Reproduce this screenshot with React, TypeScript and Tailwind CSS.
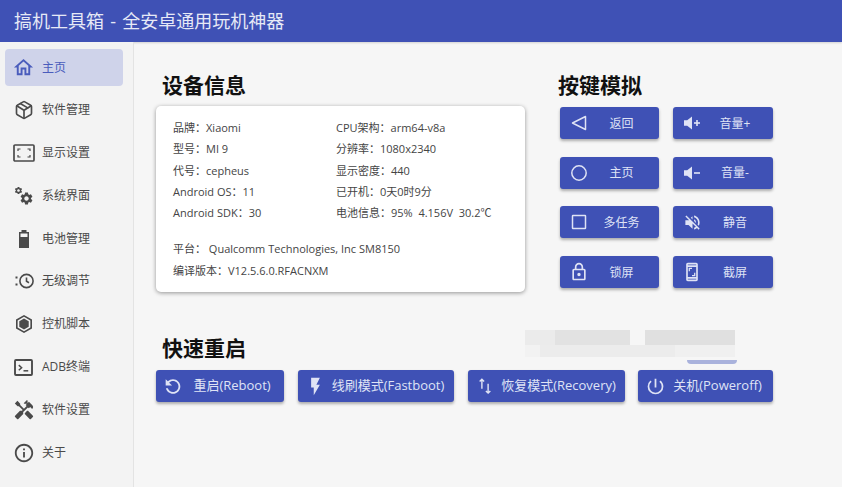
import React from 'react'
import {
  MdOutlineHome,
  MdSettings,
  MdInfoOutline,
  MdVolumeOff,
  MdOutlineLock,
  MdOutlineScreenshot,
  MdRefresh,
  MdFlashOn,
  MdPowerSettingsNew,
  MdHandyman,
} from 'react-icons/md'
import { LuPackage } from 'react-icons/lu'

const CJK = { fontFamily: '"Open Sans", "Noto Sans CJK SC", sans-serif' }

const GearsIcon = () => (
  <span className="relative block w-[20px] h-[20px]">
    <MdSettings className="absolute left-0 top-0 w-[9px] h-[9px]" />
    <MdSettings className="absolute left-[5px] top-[5px] w-[15px] h-[15px]" />
  </span>
)

const ScreenIcon = () => (
  <svg viewBox="0 0 22 18" className="w-[22px] h-[18px]" fill="none" stroke="currentColor">
    <rect x="1" y="1" width="20" height="16" rx="1" strokeWidth="1.7" />
    <path d="M5 7V5h2.5M17 7V5h-2.5M5 11v2h2.5M17 11v2h-2.5" strokeWidth="1.2" />
  </svg>
)

const BatteryIcon = () => (
  <svg viewBox="0 0 12 18" className="w-[12px] h-[18px]" fill="currentColor">
    <rect x="3.5" y="0" width="5" height="2" />
    <path d="M1 2h10v16H1zm1.5 1.5v3.5h7V3.5z" />
  </svg>
)

const ClockIcon = () => (
  <svg viewBox="0 0 20 20" className="w-[20px] h-[20px]" fill="none" stroke="currentColor" strokeWidth="1.6">
    <circle cx="12.5" cy="10" r="6.6" />
    <path d="M12.5 6.5V10.3l2.5 1.4" />
    <path d="M1.5 6.5h2M1.5 13.5h2" strokeWidth="2" />
  </svg>
)

const HexIcon = () => (
  <svg viewBox="0 0 22 22" className="w-[20px] h-[20px]" fill="currentColor">
    <path d="M11 1l8.8 5v10L11 21l-8.8-5V6zm0 2L4 7.1v7.8L11 19l7-4.1V7.1z" />
    <path d="M11 5l5.2 3v6L11 17l-5.2-3V8z" />
  </svg>
)

const TerminalIcon = () => (
  <svg viewBox="0 0 20 18" className="w-[19px] h-[17px]" fill="none" stroke="currentColor">
    <rect x="1" y="1" width="18" height="16" rx="1" strokeWidth="2" />
    <path d="M5 6.5l3 2.7-3 2.7" strokeWidth="1.6" />
    <path d="M10 12.5h5" strokeWidth="1.6" />
  </svg>
)

const navItems = [
  { label: '主页', icon: <MdOutlineHome className="w-[23px] h-[23px]" />, active: true },
  { label: '软件管理', icon: <LuPackage className="w-[20px] h-[20px]" /> },
  { label: '显示设置', icon: <ScreenIcon /> },
  { label: '系统界面', icon: <GearsIcon /> },
  { label: '电池管理', icon: <BatteryIcon /> },
  { label: '无级调节', icon: <ClockIcon /> },
  { label: '控机脚本', icon: <HexIcon /> },
  { label: 'ADB终端', icon: <TerminalIcon /> },
  { label: '软件设置', icon: <MdHandyman className="w-[22px] h-[22px]" /> },
  { label: '关于', icon: <MdInfoOutline className="w-[22px] h-[22px]" /> },
]

const BackIcon = () => (
  <svg viewBox="0 0 18 18" className="w-[18px] h-[18px]" fill="none" stroke="currentColor" strokeWidth="1.5">
    <path d="M15.5 2.5v13L2.5 9z" strokeLinejoin="round" />
  </svg>
)

const CircleIcon = () => (
  <svg viewBox="0 0 18 18" className="w-[18px] h-[18px]" fill="none" stroke="currentColor" strokeWidth="1.5">
    <circle cx="9" cy="9" r="7.2" />
  </svg>
)

const SquareIcon = () => (
  <svg viewBox="0 0 18 18" className="w-[18px] h-[18px]" fill="none" stroke="currentColor" strokeWidth="1.5">
    <rect x="2.5" y="2.5" width="13" height="13" rx="0.5" />
  </svg>
)

const SpeakerIcon = ({ plus }: { plus?: boolean }) => (
  <svg viewBox="0 0 18 18" className="w-[18px] h-[18px]" fill="currentColor">
    <path d="M1 6.2h3.2L9 2.5v13l-4.8-3.7H1z" />
    <rect x="11" y="8.2" width="6" height="1.6" />
    {plus && <rect x="13.2" y="6" width="1.6" height="6" />}
  </svg>
)

const ArrowsIcon = () => (
  <svg viewBox="0 0 18 20" className="w-[16px] h-[18px]" fill="none" stroke="currentColor" strokeWidth="1.6">
    <path d="M5.5 13V2.5M3 5l2.5-2.5L8 5" />
    <path d="M12.5 7.5V18M10 15.5l2.5 2.5 2.5-2.5" />
  </svg>
)

const keyButtons = [
  { label: '返回', icon: <BackIcon /> },
  { label: '音量+', icon: <SpeakerIcon plus /> },
  { label: '主页', icon: <CircleIcon /> },
  { label: '音量-', icon: <SpeakerIcon /> },
  { label: '多任务', icon: <SquareIcon /> },
  { label: '静音', icon: <MdVolumeOff className="w-[19px] h-[19px]" /> },
  { label: '锁屏', icon: <MdOutlineLock className="w-[20px] h-[20px]" /> },
  { label: '截屏', icon: <MdOutlineScreenshot className="w-[20px] h-[20px]" /> },
]

const rebootButtons = [
  { label: '重启(Reboot)', w: 'w-[128px]', icon: <MdRefresh className="w-[23px] h-[23px] -scale-x-100" /> },
  { label: '线刷模式(Fastboot)', w: 'w-[156px]', icon: <MdFlashOn className="w-[21px] h-[21px]" /> },
  { label: '恢复模式(Recovery)', w: 'w-[157px]', icon: <ArrowsIcon /> },
  { label: '关机(Poweroff)', w: 'w-[135px]', icon: <MdPowerSettingsNew className="w-[21px] h-[21px]" /> },
]

const leftInfo = ['品牌：Xiaomi', '型号：MI 9', '代号：cepheus', 'Android OS：11', 'Android SDK：30']
const rightInfo = ['CPU架构：arm64-v8a', '分辨率：1080x2340', '显示密度：440', '已开机：0天0时9分', '电池信息：95%  4.156V  30.2℃']

export default function App() {
  return (
    <div className="relative w-[842px] h-[487px] overflow-hidden flex flex-col bg-[#f6f6f6] text-[#3a3a3a]" style={CJK}>
      <header className="h-[42px] shrink-0 flex items-center pl-[14px] bg-[#3f51b5] text-[#e6e9f6] text-[18px] [word-spacing:1.5px] shadow-[0_1px_2px_rgba(0,0,0,0.15)] whitespace-pre">
        搞机工具箱 - 全安卓通用玩机神器
      </header>

      <div className="flex flex-1 min-h-0">
        {/* Sidebar */}
        <aside className="w-[134px] shrink-0 border-r border-[#e3e3e3] bg-[#f3f3f3] pl-[5px] pt-[7px] flex flex-col gap-[5.8px]">
          {navItems.map((item) => (
            <div
              key={item.label}
              className={`w-[118px] h-[37px] rounded-[4px] flex items-center shrink-0 ${
                item.active ? 'bg-[#cfd3ea] text-[#4a5cbc]' : 'text-[#4a4a4a]'
              }`}
            >
              <span className="w-[37px] flex justify-center shrink-0">{item.icon}</span>
              <span className="text-[12px]">{item.label}</span>
            </div>
          ))}
        </aside>

        {/* Main */}
        <main className="flex-1 pl-[22px] pt-[28px]">
          <div className="flex">
            <section className="w-[369px]">
              <h2 className="pl-[6px] text-[21px] leading-[30px] font-bold text-[#111]">设备信息</h2>
              <div className="mt-[6px] h-[186px] rounded-[5px] bg-white shadow-[0_1px_4px_rgba(0,0,0,0.4)] pl-[17px] pt-[11px] text-[11px] text-[#444]">
                <div className="flex">
                  <div className="w-[163px]">
                    {leftInfo.map((t) => (
                      <p key={t} className="h-[21.3px] leading-[21.3px]">{t}</p>
                    ))}
                  </div>
                  <div>
                    {rightInfo.map((t) => (
                      <p key={t} className="h-[21.3px] leading-[21.3px] whitespace-pre">{t}</p>
                    ))}
                  </div>
                </div>
                <p className="mt-[15px] h-[21.3px] leading-[21.3px] whitespace-pre">平台： Qualcomm Technologies, Inc SM8150</p>
                <p className="h-[21.3px] leading-[21.3px]">编译版本：V12.5.6.0.RFACNXM</p>
              </div>
            </section>

            <section className="ml-[33px]">
              <h2 className="text-[21px] leading-[30px] font-bold text-[#111]">按键模拟</h2>
              <div className="mt-[7px] ml-[2px] grid grid-cols-[99px_100px] gap-x-[14px] gap-y-[17.7px]">
                {keyButtons.map((b) => (
                  <button key={b.label} className="h-[32px] rounded-[3px] bg-[#3f51b5] text-[#dfe3f5] text-[12px] flex items-center pl-[9px] pr-[5px] shadow-[0_2px_3px_rgba(0,0,0,0.3)]">
                    <span className="w-[20px] flex justify-center shrink-0">{b.icon}</span>
                    <span className="flex-1 text-center pt-[1px]">{b.label}</span>
                  </button>
                ))}
              </div>
            </section>
          </div>

          <h2 className="mt-[41px] pl-[6px] text-[21px] leading-[30px] font-bold text-[#111]">快速重启</h2>
          <div className="mt-[7px] flex gap-[14px]">
            {rebootButtons.map((b, i) => (
              <button key={b.label} className={`${b.w} ${i === 3 ? '-ml-px' : ''} h-[32px] rounded-[3px] bg-[#3f51b5] text-[#dfe3f5] text-[13px] flex items-center pl-[6px] shadow-[0_2px_3px_rgba(0,0,0,0.3)]`}>
                <span className="w-[22px] flex justify-center shrink-0">{b.icon}</span>
                <span className="flex-1 text-center whitespace-nowrap pr-[4px]">{b.label}</span>
              </button>
            ))}
          </div>
        </main>
      </div>

      {/* Mosaic redaction over the wallpaper area */}
      <div className="absolute left-[525px] top-[330px] w-[214px] h-[36px]">
        <div className="absolute left-0 top-0 w-[30px] h-[15px] bg-[#ebebeb]" />
        <div className="absolute left-[30px] top-0 w-[75px] h-[15px] bg-[#e2e2e2]" />
        <div className="absolute left-[120px] top-0 w-[90px] h-[15px] bg-[#e0e0e0]" />
        <div className="absolute left-0 top-[15px] w-[15px] h-[12px] bg-[#f2f2f2]" />
        <div className="absolute left-[15px] top-[15px] w-[135px] h-[12px] bg-[#ececec]" />
        <div className="absolute left-[150px] top-[15px] w-[60px] h-[12px] bg-[#f0f0f0]" />
        <div className="absolute left-[162px] top-[30px] w-[50px] h-[4px] rounded-b-[20px] bg-[#a9b2dc]" />
      </div>
    </div>
  )
}
